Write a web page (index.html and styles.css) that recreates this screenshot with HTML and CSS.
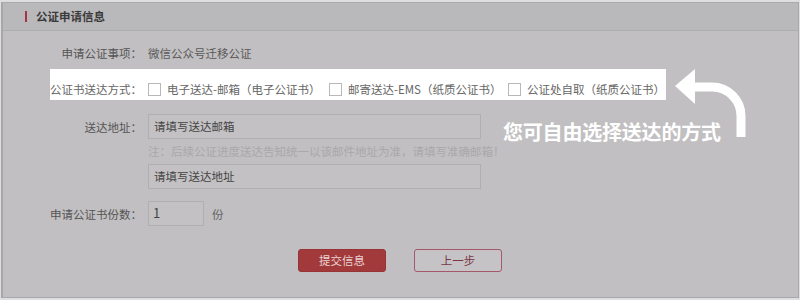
FILE: index.html
```html
<!DOCTYPE html>
<html lang="zh-CN">
<head>
<meta charset="utf-8">
<link rel="stylesheet" href="styles.css">
</head>
<body>
<div class="panel">
  <div class="head"><span class="bar"></span><span class="title">公证申请信息</span></div>
  <div class="body">
    <div class="row r1">
      <div class="label">申请公证事项：</div>
      <div class="value">微信公众号迁移公证</div>
    </div>
    <div class="row hl">
      <div class="label">公证书送达方式：</div>
      <div class="opts">
        <span class="opt o1"><span class="cb"></span>电子送达-邮箱（电子公证书）</span>
        <span class="opt o2"><span class="cb"></span>邮寄送达-EMS（纸质公证书）</span>
        <span class="opt o3"><span class="cb"></span>公证处自取（纸质公证书）</span>
      </div>
    </div>
    <div class="row r3">
      <div class="label">送达地址：</div>
      <div class="col">
        <div class="input wide">请填写送达邮箱</div>
        <div class="note">注：后续公证进度送达告知统一以该邮件地址为准，请填写准确邮箱！</div>
        <div class="input wide">请填写送达地址</div>
      </div>
    </div>
    <div class="row r4">
      <div class="label">申请公证书份数：</div>
      <div class="input small">1</div>
      <div class="unit">份</div>
    </div>
    <div class="btns">
      <div class="btn primary">提交信息</div>
      <div class="btn ghost">上一步</div>
    </div>
  </div>
</div>
<div class="tip">您可自由选择送达的方式</div>
<svg class="arrow" width="90" height="80" viewBox="668 64 90 80">
  <path d="M690 87 H712 A29 29 0 0 1 741 116 V137" fill="none" stroke="#fff" stroke-width="9"/>
  <polygon points="675,86 695,69 695,104" fill="#fff"/>
</svg>
</body>
</html>
```
FILE: styles.css
```css
html, body {
  margin: 0;
  padding: 0;
}
body {
  width: 800px;
  height: 300px;
  background: #dedddf;
  font-family: "Noto Sans CJK SC", "Noto Sans", sans-serif;
  font-size: 11.5px;
  color: #555;
  position: relative;
  overflow: hidden;
  white-space: nowrap;
}
.panel {
  margin-top: 2px;
  margin-left: 1px;
  width: 795px;
  height: 294px;
  background: #c1bfc1;
  border: 1px solid #a9a8aa;
  border-left: 2px solid #a7a6a8;
}
.head {
  height: 27px;
  background: #b9b8ba;
  border-bottom: 1px solid #adacae;
  display: flex;
  align-items: center;
  padding-left: 22px;
}
.bar {
  width: 2px;
  height: 11px;
  background: #a33447;
  margin-right: 9px;
  margin-top: -1px;
}
.title {
  font-weight: bold;
  color: #3a3a3a;
  line-height: 16px;
  margin-top: -2px;
}
.row {
  display: flex;
  align-items: center;
}
.label {
  width: 139px;
  text-align: right;
  line-height: 20px;
  color: #555;
  flex: none;
  margin-right: 6px;
}
.r1 {
  margin-top: 8px;
  height: 28px;
}
.value {
  line-height: 20px;
  color: #5a5a5a;
}
.hl {
  margin-top: 2px;
  margin-left: 47px;
  width: 616px;
  height: 31px;
  background: #fff;
  align-items: flex-end;
  padding-bottom: 1px;
  box-sizing: border-box;
}
.hl .label {
  width: 92px;
  color: #666;
}
.opts {
  display: flex;
  align-items: center;
  height: 20px;
  flex: none;
}
.opt {
  display: flex;
  align-items: center;
  color: #666;
  line-height: 20px;
  flex: none;
}
.o1 {
  width: 181px;
}
.o2 {
  width: 179px;
}
.cb {
  width: 11px;
  height: 11px;
  border: 1px solid #b8b8b8;
  background: #fff;
  margin-right: 6px;
  flex: none;
}
.r3 {
  margin-top: 14px;
  align-items: flex-start;
}
.r3 .label {
  margin-top: 3px;
}
.col {
  display: flex;
  flex-direction: column;
}
.input {
  box-sizing: border-box;
  height: 25px;
  border: 1px solid #afaeb0;
  background: #c3c1c3;
  color: #444;
  line-height: 22px;
  padding-left: 5px;
}
.wide {
  width: 333px;
}
.note {
  color: #a9a8aa;
  line-height: 20px;
  margin: 2px 0 3px;
}
.r4 {
  margin-top: 12px;
}
.small {
  width: 56px;
  height: 25px;
  font-size: 13px;
  padding-left: 4px;
}
.unit {
  margin-left: 8px;
  color: #666;
}
.btns {
  display: flex;
  margin-top: 23px;
  margin-left: 295px;
  gap: 28px;
}
.btn {
  box-sizing: border-box;
  width: 88px;
  height: 23px;
  border-radius: 3px;
  text-align: center;
  line-height: 21px;
}
.primary {
  background: #a23a3b;
  border: 1px solid #983435;
  color: #ead3d3;
}
.ghost {
  border: 1px solid #a4586a;
  background: #c5c3c5;
  color: #7a3644;
}
.tip {
  position: absolute;
  left: 503px;
  top: 119px;
  font-size: 20px;
  line-height: 26px;
  font-weight: bold;
  color: #fff;
  letter-spacing: -0.2px;
}
.arrow {
  position: absolute;
  left: 668px;
  top: 64px;
}
```
